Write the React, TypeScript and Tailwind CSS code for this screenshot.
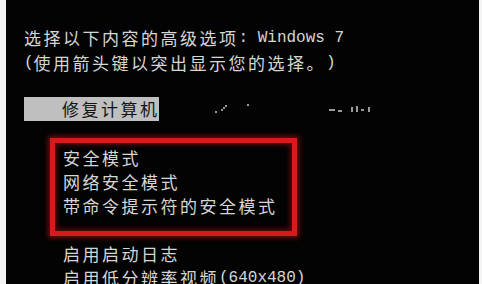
import React from 'react';

const cjk = "font-['Noto_Sans_CJK_SC',sans-serif] text-[17px] tracking-[2.5px]";
const latin = "font-['Liberation_Mono','Noto_Sans_CJK_SC',monospace] text-[16px]";

// split text into half-width / full-width runs so each gets its own cell width
const Txt = ({ text }: { text: string }) => {
    const runs = text.match(/[\x00-\x7f]+|[^\x00-\x7f]+/g) || [];
    return (
        <>
            {runs.map((r, i) => (
                <span key={i} className={/^[\x00-\x7f]/.test(r) ? latin : cjk}>
                    {r.replace(/ /g, '\u00a0')}
                </span>
            ))}
        </>
    );
};

const Line = ({ text, className = '' }: { text: string; className?: string }) => (
    <div className={`flex h-[24px] items-center whitespace-nowrap ${className}`}>
        <Txt text={text} />
    </div>
);

export default function App() {
    return (
        <div className="flex h-[284px] w-[482px] overflow-hidden bg-white">
            <div className="w-[6px] shrink-0 bg-[#f4f4f4]" />
            <div className="flex h-full w-[473px] flex-col bg-[#030303] pl-[18px] pt-[25px] text-[#d6d6d6]">
                <div className="flex h-[25px] items-center whitespace-nowrap">
                    <Txt text="选择以下内容的高级选项: Windows 7" />
                </div>
                <div className="flex h-[25px] items-center whitespace-nowrap">
                    <Txt text="(使用箭头键以突出显示您的选择。)" />
                </div>

                <div className="mt-[22px] flex items-center">
                    <div className="flex h-[24px] w-[135px] items-center bg-[#bfbfbf] pl-[38px] text-[#141414] whitespace-nowrap">
                        <Txt text="修复计算机" />
                    </div>
                    {/* smudged leftover text */}
                    <svg width="200" height="24" className="ml-[46px]" viewBox="0 0 200 24">
                        <g fill="#9a9a9a">
                            <rect x="10" y="14" width="2" height="2" />
                            <rect x="16" y="12" width="2" height="2" />
                            <rect x="18" y="10" width="2" height="2" />
                            <rect x="20" y="8" width="2" height="2" />
                            <rect x="42" y="7" width="2" height="2" />
                            <rect x="124" y="12" width="6" height="2" />
                            <rect x="133" y="13" width="4" height="2" />
                            <rect x="146" y="10" width="2" height="5" />
                            <rect x="151" y="9" width="2" height="6" />
                            <rect x="156" y="12" width="3" height="2" />
                            <rect x="163" y="10" width="2" height="5" />
                        </g>
                    </svg>
                </div>

                <div className="ml-[26px] mt-[17px] w-[247px] border-[5px] border-[#d51c1c] pb-[13px] pl-[8px] pt-[3px] shadow-[0_0_5px_2px_rgba(200,20,20,0.55),inset_0_0_5px_2px_rgba(200,20,20,0.45)]">
                    <Line text="安全模式" />
                    <Line text="网络安全模式" />
                    <Line text="带命令提示符的安全模式" />
                </div>

                <div className="mt-[6px] pl-[39px]">
                    <Line text="启用启动日志" />
                    <Line text="启用低分辨率视频(640x480)" />
                </div>
            </div>
            <div className="w-[3px] shrink-0 bg-[#f4f4f4]" />
        </div>
    );
}
